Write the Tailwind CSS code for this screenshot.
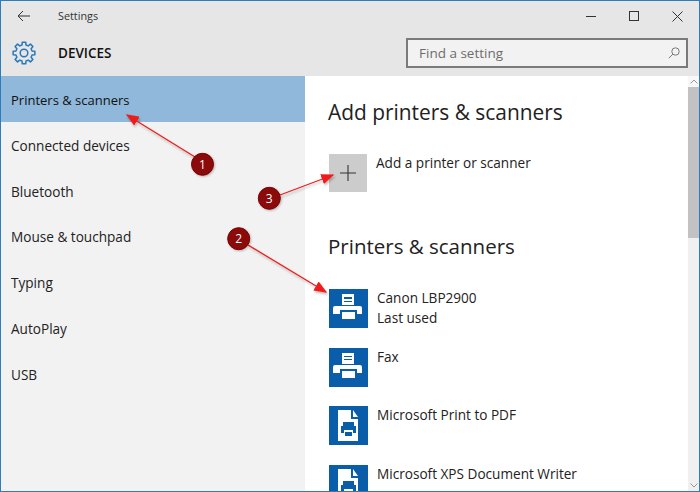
<!DOCTYPE html>
<html lang="en">
<head>
    <meta charset="UTF-8">
    <title>Settings</title>
    <script src="https://cdn.jsdelivr.net/npm/@tailwindcss/browser@4"></script>
</head>
<body class="bg-white font-['Open_Sans',sans-serif] text-[#1a1a1a]">
    <div class="relative w-[700px] h-[492px] overflow-hidden border border-t border-[#2d7dbd] flex flex-col">
        <!-- Header -->
        <header class="h-[75px] shrink-0 bg-[#e6e6e6] flex flex-col">
            <div class="h-[30px] flex items-center">
                <svg class="ml-[16px] w-[14px] h-[12px]" viewBox="0 0 14 12" fill="none" stroke="#333" stroke-width="1"><path d="M13 6H1M6 1L1 6l5 5"/></svg>
                <span class="ml-[27px] mt-[1px] text-[10.8px] text-[#333]">Settings</span>
                <div class="ml-auto flex items-center mr-[16px] gap-[33px]">
                    <div class="w-[10px] h-px bg-[#333]"></div>
                    <div class="w-[10px] h-[10px] border border-[#333]"></div>
                    <svg class="w-[11px] h-[11px]" viewBox="0 0 11 11" stroke="#333" stroke-width="1"><path d="M.5.5l10 10M10.5.5l-10 10"/></svg>
                </div>
            </div>
            <div class="flex-1 flex items-center pb-[1px]">
                <svg class="ml-[11px] w-[24px] h-[24px]" viewBox="-12 -12 24 24" fill="none" stroke="#2a78b8" stroke-width="1.500" stroke-linejoin="round"><circle r="3.800"/><path d="M-2-8.050L-1.720-10.860H1.720L2-8.050L4.280-7.110L6.460-8.900L8.900-6.460L7.110-4.280L8.050-2L10.860-1.720V1.720L8.050 2L7.110 4.280L8.900 6.460L6.460 8.900L4.280 7.110L2 8.050L1.720 10.860H-1.720L-2 8.050L-4.280 7.110L-6.460 8.900L-8.900 6.460L-7.110 4.280L-8.050 2L-10.860 1.720V-1.720L-8.050-2L-7.110-4.280L-8.900-6.460L-6.460-8.900L-4.280-7.110Z"/></svg>
                <span class="ml-[22px] text-[13.5px] font-semibold text-[#111]">DEVICES</span>
                <div class="ml-auto mr-[11px] w-[282px] h-[30px] bg-[#f2f2f2] border-2 border-[#7a7a7a] flex items-center pl-[11px] pr-[6px]">
                    <span class="text-[13.5px] text-[#6d6d6d]">Find a setting</span>
                    <svg class="ml-auto w-[12px] h-[12px]" viewBox="0 0 12 12" fill="none" stroke="#777"><circle cx="7.500" cy="4.500" r="3.700"/><path d="M4.800 7.200L.8 11.200"/></svg>
                </div>
            </div>
        </header>

        <div class="flex-1 flex min-h-0">
            <!-- Sidebar -->
            <nav class="w-[304px] shrink-0 bg-[#f2f2f2] text-[13.6px] text-[#222]">
                <div class="h-[45.75px] pl-[10px] pt-[3px] flex items-center bg-[#8fb8da] text-[#111] text-[13px]">Printers &amp; scanners</div>
                <div class="h-[45.75px] pl-[10px] pt-[3px] flex items-center">Connected devices</div>
                <div class="h-[45.75px] pl-[10px] pt-[3px] flex items-center">Bluetooth</div>
                <div class="h-[45.75px] pl-[10px] pt-[3px] flex items-center">Mouse &amp; touchpad</div>
                <div class="h-[45.75px] pl-[10px] pt-[3px] flex items-center">Typing</div>
                <div class="h-[45.75px] pl-[10px] pt-[3px] flex items-center">AutoPlay</div>
                <div class="h-[45.75px] pl-[10px] pt-[3px] flex items-center">USB</div>
            </nav>

            <!-- Content -->
            <main class="flex-1 relative pl-[23px] overflow-hidden text-[13.6px] text-[#222]">
                <h2 class="mt-[21px] text-[20.900px] leading-[30px]">Add printers &amp; scanners</h2>
                <div class="mt-[27px] ml-px flex">
                    <div class="w-[38px] h-[38px] bg-[#cccccc] flex items-center justify-center">
                        <svg class="w-[16px] h-[16px]" viewBox="0 0 16 16" stroke="#333" stroke-width="1.100"><path d="M8 0v16M0 8h16"/></svg>
                    </div>
                    <span class="ml-[9px] leading-[20px] -mt-[1px]">Add a printer or scanner</span>
                </div>
                <h2 class="mt-[39px] text-[20.500px] leading-[30px]">Printers &amp; scanners</h2>

                <div class="mt-[28px] ml-px flex h-[58.700px]">
                    <div class="w-[39px] h-[39px] bg-[#0a5da8] shrink-0">
                        <svg class="w-[39px] h-[39px]" viewBox="0 0 39 39"><path fill="#fff" d="M13 5h12v11H13zM6 17h25a2 2 0 0 1 2 2v6h-5v-4H11v4H4v-6a2 2 0 0 1 2-2zM13 23h13v7H13z"/><path fill="#0a5da8" d="M15 8h8v2h-8zM15 12h8v1h-8z"/></svg>
                    </div>
                    <div class="ml-[9px] -mt-[1px] leading-[20px]"><div>Canon LBP2900</div><div>Last used</div></div>
                </div>
                <div class="ml-px flex h-[58.700px]">
                    <div class="w-[39px] h-[39px] bg-[#0a5da8] shrink-0">
                        <svg class="w-[39px] h-[39px]" viewBox="0 0 39 39"><path fill="#fff" d="M13 5h12v11H13zM6 17h25a2 2 0 0 1 2 2v6h-5v-4H11v4H4v-6a2 2 0 0 1 2-2zM13 23h13v7H13z"/><path fill="#0a5da8" d="M15 8h8v1h-8zM15 11h8v1h-8z"/></svg>
                    </div>
                    <div class="ml-[9px] -mt-[1px] leading-[20px]">Fax</div>
                </div>
                <div class="ml-px flex h-[58.700px]">
                    <div class="w-[39px] h-[39px] bg-[#0a5da8] shrink-0">
                        <svg class="w-[39px] h-[39px]" viewBox="0 0 39 39"><path fill="#fff" d="M9 4h13v9h7v22H9zM24 4l5 7h-5z"/><path fill="#0a5da8" d="M14 16h11v4h2v7h-3v-3H15v3h-3v-7h2zM16 26h7v4h-7z"/></svg>
                    </div>
                    <div class="ml-[9px] -mt-[1px] leading-[20px]">Microsoft Print to PDF</div>
                </div>
                <div class="ml-px flex h-[58.700px]">
                    <div class="w-[39px] h-[39px] bg-[#0a5da8] shrink-0">
                        <svg class="w-[39px] h-[39px]" viewBox="0 0 39 39"><path fill="#fff" d="M9 4h13v9h7v22H9zM24 4l5 7h-5z"/><path fill="#0a5da8" d="M14 16h11v4h2v7h-3v-3H15v3h-3v-7h2zM16 26h7v4h-7z"/></svg>
                    </div>
                    <div class="ml-[9px] -mt-[1px] leading-[20px]">Microsoft XPS Document Writer</div>
                </div>

                <!-- Scrollbar -->
                <div class="absolute top-0 right-0 bottom-0 w-[11px] bg-[#f0f0f0] flex flex-col">
                    <div class="h-[11px] bg-[#f7f7f7] flex items-center justify-center">
                        <svg class="w-[8px] h-[5px]" viewBox="0 0 8 5" fill="none" stroke="#999"><path d="M.5 4.500L4 1l3.500 3.500"/></svg>
                    </div>
                    <div class="h-[151px] bg-[#c2c2c2]"></div>
                    <svg class="mt-auto mb-[3px] mx-auto w-[8px] h-[5px]" viewBox="0 0 8 5" fill="none" stroke="#999"><path d="M.5.5L4 4l3.500-3.500"/></svg>
                </div>
            </main>
        </div>

        <!-- Callouts drawn on top of the screenshot -->
        <svg class="absolute -top-px -left-px w-[700px] h-[492px] pointer-events-none" viewBox="0 0 700 492">
            <defs>
                <marker id="head" markerWidth="10" markerHeight="8" refX="9" refY="4" orient="auto"><path d="M0 0L10 4L0 8z" fill="#f01c1c"/></marker>
            </defs>
            <g stroke="#f01c1c" stroke-width="1.300" fill="none" class="drop-shadow-[1px_2px_1px_rgba(0,0,0,0.25)]">
                <line x1="195" y1="157" x2="127" y2="115" marker-end="url(#head)"/>
                <line x1="280" y1="195" x2="333" y2="175" marker-end="url(#head)"/>
                <line x1="248" y1="245" x2="326" y2="292" marker-end="url(#head)"/>
            </g>
            <g fill="#8b0a0a" stroke="#7a0000" class="drop-shadow-[1px_1px_1px_rgba(0,0,0,0.25)]">
                <circle cx="202.500" cy="164.300" r="11"/>
                <circle cx="269.300" cy="198.300" r="11"/>
                <circle cx="238.700" cy="238.700" r="11"/>
            </g>
            <g fill="#fff" font-size="12" text-anchor="middle" font-family="Open Sans, sans-serif">
                <text x="202.500" y="168.800">1</text>
                <text x="269.300" y="202.800">3</text>
                <text x="238.700" y="243">2</text>
            </g>
        </svg>
    </div>
</body>
</html>
